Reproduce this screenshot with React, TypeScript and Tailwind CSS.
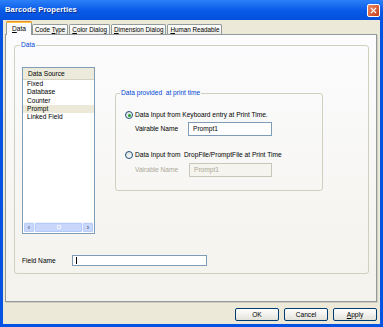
import { X } from "lucide-react";

const font = { fontFamily: '"Liberation Sans", Arial, sans-serif' };

function Tab({ label, u, active }: { label: string; u: number; active?: boolean }) {
  const text = (
    <span className="whitespace-pre">
      {label.slice(0, u)}
      <span className="underline">{label[u]}</span>
      {label.slice(u + 1)}
    </span>
  );
  if (active) {
    return (
      <div className="relative z-10 h-[14px] w-[26px] rounded-t-[2px] border-x border-[#919B9C] bg-[#FCFCFE] flex flex-col">
        <div className="h-[2px] bg-[#FFC83C] border-t border-[#E68B2C] rounded-t-[2px] -mx-px" />
        <div className="flex-1 flex items-center justify-center text-[6.6px] text-black">{text}</div>
      </div>
    );
  }
  return (
    <div className="h-[11px] px-[2px] rounded-t-[2px] border border-b-0 border-[#919B9C] bg-gradient-to-b from-white to-[#ECEBE5] flex items-center text-[6.3px] text-black">
      {text}
    </div>
  );
}

function Radio({ checked }: { checked?: boolean }) {
  return (
    <div className="w-[8px] h-[8px] rounded-full border border-[#1C5180] bg-gradient-to-br from-[#DCDCD7] to-white flex items-center justify-center shrink-0">
      {checked && <div className="w-[3px] h-[3px] rounded-full bg-[#21A121]" />}
    </div>
  );
}

function Btn({ children }: { children: React.ReactNode }) {
  return (
    <div className="w-[44px] h-[13px] rounded-[2px] border border-[#003C74] bg-gradient-to-b from-white to-[#E3E2DA] flex items-center justify-center text-[6.6px] text-black">
      {children}
    </div>
  );
}

export default function App() {
  return (
    <div
      className="w-[383px] h-[327px] bg-[#0553E2] flex flex-col px-[3px] pb-[3px] overflow-hidden"
      style={font}
    >
      {/* title bar */}
      <div className="h-[20px] -mx-[3px] px-[5px] flex items-center justify-between bg-gradient-to-b from-[#2C80F8] via-[#0A5BE8] to-[#0450DC]">
        <span className="text-white font-bold text-[7.6px] tracking-[0.1px] [text-shadow:1px_1px_0_#0B2F8C]">
          Barcode Properties
        </span>
        <div className="w-[13px] h-[13px] mr-[-2px] rounded-[2px] border border-white bg-gradient-to-br from-[#EC8A62] to-[#C53A17] flex items-center justify-center">
          <X className="w-[9px] h-[9px] text-white" strokeWidth={3} />
        </div>
      </div>

      {/* body */}
      <div className="flex-1 bg-[#ECE9D8] flex flex-col">
        <div className="mt-[1px] ml-[3px] flex items-end gap-[1px] -mb-px">
          <Tab label="Data" u={0} active />
          <div className="-ml-px">
            <Tab label="Code Type" u={5} />
          </div>
          <Tab label="Color Dialog" u={0} />
          <Tab label="Dimension Dialog" u={0} />
          <Tab label="Human Readable" u={0} />
        </div>

        <div className="ml-[2px] w-[372px] h-[268px] border border-[#919B9C] bg-gradient-to-b from-[#FCFCFE] to-[#F3F2EC] shadow-[1px_1px_0_#D0CEBF] flex flex-col">
          {/* Data group */}
          <div className="relative mt-[10px] ml-[8px] w-[355px] h-[229px] rounded-[3px] border border-[#D0D0BF] flex flex-col">
            <span className="absolute left-[5px] -top-[5px] px-[1px] bg-[#FBFBFC] text-[6.6px] leading-[8px] text-[#0046D5]">
              Data
            </span>

            <div className="flex pl-[7px] pt-[21px]">
              {/* list */}
              <div className="w-[73px] h-[167px] border border-[#7F9DB9] bg-white flex flex-col text-[6.6px] text-black">
                <div className="h-[12px] bg-[#EBEADB] border-b border-[#D6D2C2] flex items-center pl-[5px] shrink-0">
                  Data Source
                </div>
                <div className="flex flex-col">
                  {["Fixed", "Database", "Counter", "Prompt", "Linked Field"].map((t) => (
                    <div
                      key={t}
                      className={`h-[8.3px] leading-[8.3px] pl-[4px] ${t === "Prompt" ? "bg-[#ECE9D8]" : ""}`}
                    >
                      {t}
                    </div>
                  ))}
                </div>
                <div className="flex-1" />
                {/* scrollbar */}
                <div className="h-[10px] mx-px mb-px bg-[#EEF3FD] flex items-center">
                  <div className="w-[10px] h-[9px] rounded-[1px] border border-[#B9CDF7] bg-[#C8D7F9] flex items-center justify-center text-[#4D6185] text-[7px] font-bold leading-none">
                    ‹
                  </div>
                  <div className="flex-1 h-[9px] mx-[1px] rounded-[1px] border border-[#B3C9F7] bg-[#C8D7FB] flex items-center justify-center">
                    <div className="w-[4px] h-[4px] border border-[#EEF3FE]" />
                  </div>
                  <div className="w-[10px] h-[9px] rounded-[1px] border border-[#B9CDF7] bg-[#C8D7F9] flex items-center justify-center text-[#4D6185] text-[7px] font-bold leading-none">
                    ›
                  </div>
                </div>
              </div>

              {/* print time group */}
              <div className="relative ml-[20px] mt-[26px] w-[208px] h-[98px] rounded-[3px] border border-[#D0D0BF] flex flex-col text-[6.6px] text-black">
                <span className="absolute left-[4px] -top-[5px] px-[1px] bg-[#FAFAFA] leading-[8px] text-[#0046D5]">
                  Data provided&nbsp; at print time
                </span>
                <div className="mt-[16px] ml-[9px] flex items-center gap-[2px] h-[10px]">
                  <Radio checked />
                  <span>Data Input from Keyboard entry at Print Time.</span>
                </div>
                <div className="mt-[2px] ml-[19px] flex items-center h-[14px]">
                  <span className="w-[53px]">Vairable Name</span>
                  <div className="w-[84px] h-[14px] border border-[#7F9DB9] bg-white flex items-center pl-[4px]">
                    Prompt1
                  </div>
                </div>
                <div className="mt-[14px] ml-[9px] flex items-center gap-[2px] h-[10px]">
                  <Radio />
                  <span>Data Input from&nbsp; DropFile/PromptFile at Print Time</span>
                </div>
                <div className="mt-[3px] ml-[19px] flex items-center h-[14px] text-[#ACA899]">
                  <span className="w-[54px]">Vairable Name</span>
                  <div className="w-[83px] h-[14px] border border-[#C9C7BA] bg-[#F5F4EE] flex items-center pl-[4px]">
                    Prompt1
                  </div>
                </div>
              </div>
            </div>

            {/* field name */}
            <div className="mt-[21px] ml-[7px] flex items-center h-[11px] text-[6.6px] text-black">
              <span className="w-[50px]">Field Name</span>
              <div className="w-[135px] h-[11px] border border-[#7F9DB9] bg-white flex items-center pl-[3px]">
                <div className="w-px h-[7px] bg-black" />
              </div>
            </div>
          </div>
        </div>

        {/* buttons */}
        <div className="mt-[6px] mr-[3px] flex justify-end gap-[5px]">
          <Btn>OK</Btn>
          <Btn>Cancel</Btn>
          <Btn>
            <span className="underline">A</span>pply
          </Btn>
        </div>
      </div>
    </div>
  );
}
